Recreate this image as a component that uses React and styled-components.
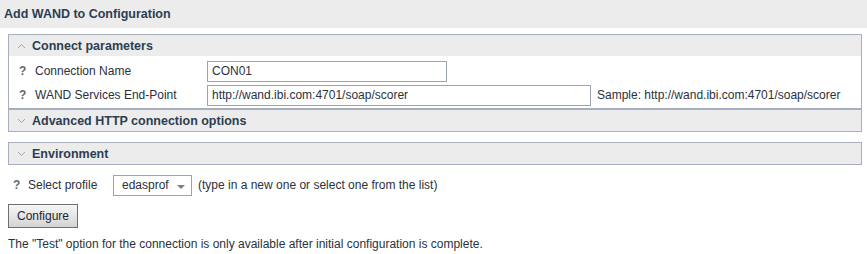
import styled, { createGlobalStyle } from "styled-components";

const GlobalStyle = createGlobalStyle`
  body {
    margin: 0;
    background: #ffffff;
    font-family: "Liberation Sans", Arial, sans-serif;
    font-size: 12px;
    color: #2a3140;
  }
`;

const Page = styled.div`
  width: 867px;
`;

const TitleBar = styled.div`
  height: 28px;
  background: #ececec;
  padding-left: 4px;
  display: flex;
  align-items: center;
  font-weight: bold;
  font-size: 12.5px;
  color: #2c3e52;
`;

const Content = styled.div`
  padding: 6px 5px 0 8px;
`;

const Panel = styled.div`
  border: 1px solid #a6aec0;
  margin-bottom: ${(props) => props.gap || 0}px;
`;

const PanelHeader = styled.div`
  height: 21px;
  background: #ececec;
  display: flex;
  align-items: center;
  padding-left: 8px;
  gap: 6px;
  font-weight: bold;
  font-size: 12.5px;
  color: #2c3e52;
`;

const PanelBody = styled.div`
  padding: 3px 0 1px 0;
`;

const Row = styled.div`
  display: flex;
  align-items: center;
  height: 24px;
`;

const Help = styled.span`
  width: ${(props) => props.width || 26}px;
  padding-left: ${(props) => props.indent || 10}px;
  box-sizing: border-box;
  font-weight: bold;
  color: #666a70;
`;

const Label = styled.span`
  width: ${(props) => props.width}px;
  color: #2a3140;
`;

const TextBox = styled.div`
  width: ${(props) => props.width}px;
  height: 19px;
  border: 1px solid #9aa3b5;
  padding-left: 4px;
  display: flex;
  align-items: center;
  box-sizing: content-box;
  color: #2a3140;
`;

const Hint = styled.span`
  margin-left: 6px;
  color: #2a3140;
`;

const ProfileRow = styled.div`
  display: flex;
  align-items: center;
  margin-top: 9px;
  height: 22px;
`;

const SelectBox = styled.div`
  width: 79px;
  height: 21px;
  border: 1px solid #9aa3b5;
  box-sizing: border-box;
  display: flex;
  align-items: center;
  justify-content: space-between;
  padding: 0 6px 0 8px;
  margin-right: 6px;
`;

const Button = styled.button`
  margin-top: 8px;
  height: 24px;
  padding: 0 8px;
  border: 1px solid #6f6f6f;
  background: linear-gradient(#f6f6f6, #d4d4d4);
  font-family: "Liberation Sans", Arial, sans-serif;
  font-size: 12px;
  color: #1d2738;
  display: block;
`;

const Note = styled.div`
  margin-top: 9px;
  color: #2a3140;
`;

const Chevron = ({ up }) => (
  <svg width="9" height="6" viewBox="0 0 9 6">
    <polyline
      points={up ? "1,5 4.5,1.5 8,5" : "1,1 4.5,4.5 8,1"}
      fill="none"
      stroke="#a0a4ab"
      strokeWidth="1"
    />
  </svg>
);

const Caret = () => (
  <svg width="8" height="5" viewBox="0 0 8 5" style={{ marginTop: 4 }}>
    <polygon points="0,0 8,0 4,4" fill="#777c85" />
  </svg>
);

export default function App() {
  return (
    <Page>
      <GlobalStyle />
      <TitleBar>Add WAND to Configuration</TitleBar>
      <Content>
        <Panel>
          <PanelHeader>
            <Chevron up />
            Connect parameters
          </PanelHeader>
          <PanelBody>
            <Row>
              <Help>?</Help>
              <Label width={172}>Connection Name</Label>
              <TextBox width={234}>CON01</TextBox>
            </Row>
            <Row>
              <Help>?</Help>
              <Label width={172}>WAND Services End-Point</Label>
              <TextBox width={378}>http://wand.ibi.com:4701/soap/scorer</TextBox>
              <Hint>Sample: http://wand.ibi.com:4701/soap/scorer</Hint>
            </Row>
          </PanelBody>
        </Panel>
        <Panel gap={10}>
          <PanelHeader>
            <Chevron />
            Advanced HTTP connection options
          </PanelHeader>
        </Panel>
        <Panel>
          <PanelHeader>
            <Chevron />
            Environment
          </PanelHeader>
        </Panel>
        <ProfileRow>
          <Help width={20} indent={5}>?</Help>
          <Label width={85}>Select profile</Label>
          <SelectBox>
            edasprof
            <Caret />
          </SelectBox>
          (type in a new one or select one from the list)
        </ProfileRow>
        <Button>Configure</Button>
        <Note>
          The "Test" option for the connection is only available after initial
          configuration is complete.
        </Note>
      </Content>
    </Page>
  );
}
